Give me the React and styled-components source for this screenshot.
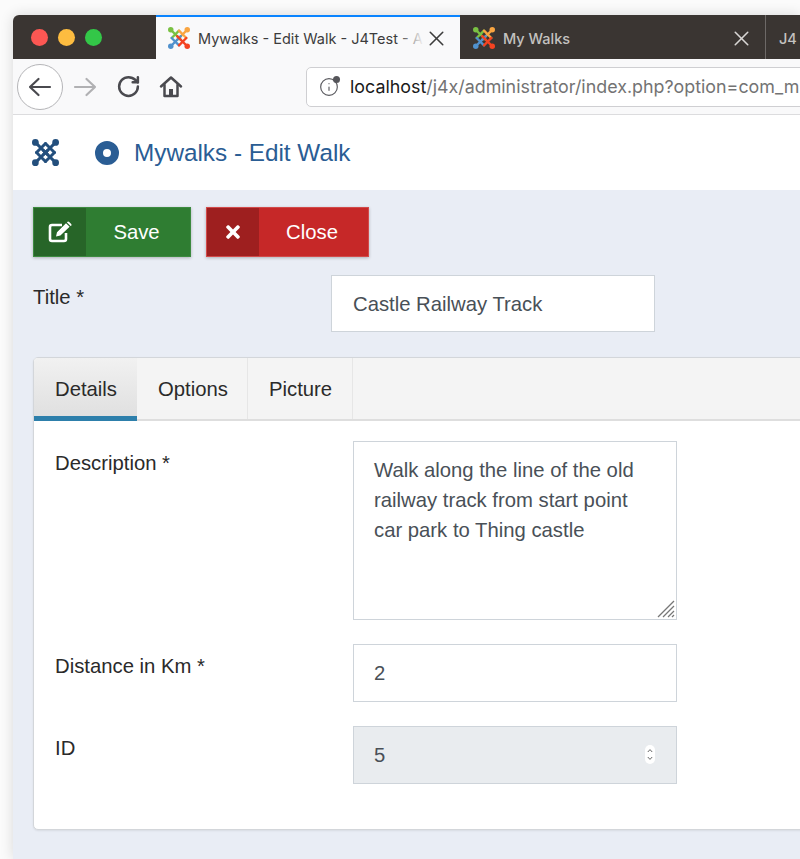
import React from 'react';
import styled, { createGlobalStyle } from 'styled-components';
import { RotateCw, Info, X } from 'lucide-react';
import { FaTimes } from 'react-icons/fa';

const GlobalStyle = createGlobalStyle`
html, body {
  margin: 0;
  padding: 0;
  width: 800px;
  height: 859px;
  overflow: hidden;
  background: #fbfbfb;
}
* { box-sizing: border-box; }
`

const Browser = styled.div`
margin: 15px 0 0 13px;
height: 844px;
border-radius: 6px 0 0 0;
overflow: hidden;
box-shadow: 0 0 14px rgba(0, 0, 0, .14);
display: flex;
flex-direction: column;
font-family: "Liberation Sans", Arial, sans-serif;
`

const TabStrip = styled.div`
height: 44px;
flex-shrink: 0;
display: flex;
background: #3a3532;
`

const Traffic = styled.div`
width: 143px;
flex-shrink: 0;
display: flex;
align-items: center;
gap: 10px;
padding: 0 0 0 18px;
`

const Light = styled.span`
width: 17px;
height: 17px;
border-radius: 50%;
background: ${p => p.$color};
`

const BrowserTab = styled.div`
width: ${p => p.$active ? '304px' : '305px'};
flex-shrink: 0;
display: flex;
align-items: center;
padding: ${p => p.$active ? '0 11px 0 12px' : '2px 11px 0 13px'};
background: ${p => p.$active ? '#f9f9fa' : 'transparent'};
border-top: ${p => p.$active ? '2px solid #0a84ff' : '0'};
color: ${p => p.$active ? '#3c3c3c' : '#c4c2c0'};
font-family: Inter, "Noto Sans", sans-serif;
font-size: 14.5px;
font-weight: ${p => p.$active ? 400 : 500};
white-space: nowrap;
`

const TabLabel = styled.span`
flex: 1;
margin-left: 8px;
position: relative;
`

const TabFade = styled.span`
position: absolute;
right: 0;
top: 0;
bottom: 0;
width: 26px;
background: linear-gradient(to right, rgba(249, 249, 250, 0), #f9f9fa);
`

const MiniTab = styled.div`
flex: 1;
display: flex;
align-items: center;
padding: 2px 0 0 13px;
border-left: 1px solid #6d6967;
color: #c4c2c0;
font-family: Inter, "Noto Sans", sans-serif;
font-size: 14.5px;
font-weight: 500;
`

const Toolbar = styled.div`
height: 56px;
flex-shrink: 0;
display: flex;
align-items: center;
padding: 0 0 0 4px;
background: #f9f9fa;
border-bottom: 1px solid #dcdcde;
color: #4a4a4f;
`

const BackButton = styled.div`
width: 46px;
height: 46px;
border-radius: 50%;
border: 1px solid #b5b5b8;
background: #fff;
display: flex;
align-items: center;
justify-content: center;
`

const ToolIcon = styled.div`
margin-left: ${p => p.$left}px;
display: flex;
color: ${p => p.$muted ? '#b1b1b3' : '#4a4a4f'};
`

const UrlBar = styled.div`
margin-left: 123px;
flex: 1;
height: 40px;
margin-right: -40px;
display: flex;
align-items: center;
padding-left: 12px;
background: #fff;
border: 1px solid #cfcfd2;
border-radius: 5px;
font-family: Inter, "Noto Sans", sans-serif;
font-size: 17.85px;
color: #737373;
white-space: nowrap;
overflow: hidden;
`

const InfoWrap = styled.span`
position: relative;
display: flex;
margin-right: 11px;
color: #5b5b60;
`

const InfoDot = styled.span`
position: absolute;
right: -1px;
top: -1px;
width: 7px;
height: 7px;
border-radius: 50%;
background: #55555a;
`

const Host = styled.span`
color: #1a1a1a;
`

const PageHeader = styled.header`
height: 75px;
flex-shrink: 0;
display: flex;
align-items: center;
padding: 0 0 0 19px;
background: #fff;
`

const LogoGap = styled.span`
width: 36px;
`

const PageTitle = styled.h1`
margin: 0 0 0 15px;
color: #2a5d94;
font-size: 24.3px;
font-weight: 400;
`

const Main = styled.main`
flex: 1;
background: #e9edf5;
padding: 17px 0 0 20px;
overflow: hidden;
`

const Actions = styled.div`
display: flex;
gap: 15px;
`

const ActionButton = styled.button`
width: ${p => p.$width}px;
height: 50px;
padding: 0;
display: flex;
align-items: stretch;
border: 1px solid ${p => p.$border};
background: ${p => p.$color};
color: #fff;
font-family: "Liberation Sans", Arial, sans-serif;
font-size: 20.3px;
box-shadow: 0 1px 3px rgba(0, 0, 0, .25);
`

const ActionIcon = styled.span`
width: 52px;
display: flex;
align-items: center;
justify-content: center;
background: ${p => p.$color};
font-size: ${p => p.$size}px;
`

const ActionText = styled.span`
flex: 1;
display: flex;
align-items: center;
justify-content: center;
padding-right: 3px;
`

const TitleRow = styled.div`
margin-top: 18px;
display: grid;
grid-template-columns: 298px 324px;
`

const Label = styled.label`
padding-top: 7px;
color: #2a2a2a;
font-size: 20.3px;
line-height: 30px;
`

const TextInput = styled.input`
display: block;
width: 324px;
height: 58px;
padding: 0 20px;
border: 1px solid #ced4da;
border-radius: 0;
outline: 0;
background: ${p => p.disabled ? '#e9ecef' : '#fff'};
color: #495057;
font-family: "Liberation Sans", Arial, sans-serif;
font-size: 20.3px;
opacity: 1;
-webkit-text-fill-color: #495057;
`

const TitleInput = styled(TextInput)`
height: 57px;
padding: 1px 21px 0;
`

const Card = styled.section`
margin: 25px -20px 0 0;
border: 1px solid #d3d6da;
border-radius: 5px;
background: #fff;
overflow: hidden;
box-shadow: 0 1px 2px rgba(0, 0, 0, .08);
`

const CardTabs = styled.nav`
height: 63px;
display: flex;
background: #f4f4f4;
border-bottom: 2px solid #dedede;
`

const CardTab = styled.div`
display: flex;
align-items: center;
width: ${p => p.$width}px;
height: ${p => p.$active ? '63px' : '61px'};
padding: ${p => p.$active ? '5px' : '1px'} 0 0 21px;
border-right: ${p => p.$active ? '0' : '1px solid #e6e6e6'};
border-bottom: ${p => p.$active ? '5px solid #2d7fab' : '0'};
background: ${p => p.$active ? 'linear-gradient(#f1f1f1, #e0e0e0)' : 'transparent'};
color: #2a2a2a;
font-size: 20.3px;
`

const CardBody = styled.div`
padding: 20px 0 45px 21px;
display: grid;
grid-template-columns: 298px 324px;
row-gap: 24px;
`

const DescriptionBox = styled.div`
position: relative;
width: 324px;
height: 179px;
`

const Description = styled.textarea`
display: block;
width: 100%;
height: 100%;
padding: 13px 20px;
border: 1px solid #ced4da;
border-radius: 0;
outline: 0;
resize: none;
overflow: hidden;
color: #495057;
font-family: "Liberation Sans", Arial, sans-serif;
font-size: 20.3px;
line-height: 30px;
`

const Grip = styled.svg`
position: absolute;
right: 2px;
bottom: 2px;
`

const NumberBox = styled.div`
position: relative;
width: 324px;
`

const Spinner = styled.svg`
position: absolute;
right: 22px;
top: 19px;
`

function JoomlaMark({ size, mono }) {
  const c = mono
    ? ['#234f7d', '#234f7d', '#234f7d', '#234f7d']
    : ['#7ac143', '#f9a541', '#f44321', '#5091cd'];
  return (
    <svg width={size} height={size} viewBox="0 0 24 24" fill="none" strokeWidth="2.6" strokeLinecap="round">
      <path d="M3 3 L14 14 M12 4 L4 12" stroke={c[0]} />
      <path d="M21 3 L10 14 M12 4 L20 12" stroke={c[1]} />
      <path d="M3 21 L14 10 M4 12 L12 20" stroke={c[3]} />
      <path d="M21 21 L10 10 M20 12 L12 20" stroke={c[2]} />
      <circle cx="3" cy="3" r="3" fill={c[0]} />
      <circle cx="21" cy="3" r="3" fill={c[1]} />
      <circle cx="21" cy="21" r="3" fill={c[2]} />
      <circle cx="3" cy="21" r="3" fill={c[3]} />
    </svg>
  );
}

function TargetIcon() {
  return (
    <svg width="24" height="24" viewBox="0 0 24 24">
      <circle cx="12" cy="12" r="8" fill="none" stroke="#2a5d94" strokeWidth="8" />
    </svg>
  );
}

function NavArrow({ flip }) {
  return (
    <svg width="24" height="20" viewBox="0 0 24 20" fill="none" stroke="currentColor" strokeWidth="2.2"
      strokeLinecap="round" strokeLinejoin="round" style={{ transform: flip ? 'scaleX(-1)' : 'none' }}>
      <path d="M2 10 H22 M10.5 2 L2 10 L10.5 18" />
    </svg>
  );
}

function HomeIcon() {
  return (
    <svg width="24" height="24" viewBox="0 0 24 24" fill="none" stroke="currentColor" strokeWidth="2.5"
      strokeLinecap="round" strokeLinejoin="round">
      <path d="M2 11.5 L12 2.5 L22 11.5" />
      <path d="M5.5 10 V21 H18.5 V10" />
      <rect x="10" y="14" width="4" height="7" fill="currentColor" stroke="none" />
    </svg>
  );
}

function EditIcon() {
  return (
    <svg width="25" height="22" viewBox="0 0 25 22">
      <path d="M14 4 H4 Q2 4 2 6 V18 Q2 20 4 20 H16 Q18 20 18 18 V12" fill="none" stroke="#fff" strokeWidth="2.6" />
      <path d="M8 15.5 L9 11.2 L18 2.2 L21.6 5.8 L12.4 14.6 Z M19.2 1 Q20.2 0.2 21.2 1 L23.2 3 Q24 4 23.2 4.8 L22.6 5 L19 1.4 Z" fill="#fff" />
    </svg>
  );
}

export default function App() {
  return (
    <Browser>
      <GlobalStyle />

      <TabStrip>
        <Traffic>
          <Light $color="#fc5753" />
          <Light $color="#fdbc40" />
          <Light $color="#33c748" />
        </Traffic>
        <BrowserTab $active>
          <JoomlaMark size={22} />
          <TabLabel>Mywalks - Edit Walk - J4Test - A<TabFade /></TabLabel>
          <X size={25} strokeWidth={1.5} />
        </BrowserTab>
        <BrowserTab>
          <JoomlaMark size={22} />
          <TabLabel>My Walks</TabLabel>
          <X size={25} strokeWidth={1.5} color="#d8d6d4" />
        </BrowserTab>
        <MiniTab>J4</MiniTab>
      </TabStrip>

      <Toolbar>
        <BackButton><NavArrow /></BackButton>
        <ToolIcon $left={10} $muted><NavArrow flip /></ToolIcon>
        <ToolIcon $left={19}><RotateCw size={25} strokeWidth={2.4} /></ToolIcon>
        <ToolIcon $left={18}><HomeIcon /></ToolIcon>
        <UrlBar>
          <InfoWrap><Info size={20} strokeWidth={1.4} /><InfoDot /></InfoWrap>
          <Host>localhost</Host>/j4x/administrator/index.php?option=com_m
        </UrlBar>
      </Toolbar>

      <PageHeader>
        <JoomlaMark size={27} mono />
        <LogoGap />
        <TargetIcon />
        <PageTitle>Mywalks - Edit Walk</PageTitle>
      </PageHeader>

      <Main>
        <Actions>
          <ActionButton $width={158} $color="#2f7d32" $border="#3d8a40">
            <ActionIcon $color="#276528"><EditIcon /></ActionIcon>
            <ActionText>Save</ActionText>
          </ActionButton>
          <ActionButton $width={163} $color="#c62828" $border="#d24a4a">
            <ActionIcon $color="#9e1f1f" $size={20}><FaTimes /></ActionIcon>
            <ActionText>Close</ActionText>
          </ActionButton>
        </Actions>

        <TitleRow>
          <Label>Title *</Label>
          <TitleInput defaultValue="Castle Railway Track" />
        </TitleRow>

        <Card>
          <CardTabs>
            <CardTab $active $width={103}>Details</CardTab>
            <CardTab $width={111}>Options</CardTab>
            <CardTab $width={105}>Picture</CardTab>
          </CardTabs>
          <CardBody>
            <Label>Description *</Label>
            <DescriptionBox>
              <Description defaultValue="Walk along the line of the old railway track from start point car park to Thing castle" />
              <Grip width="18" height="18" viewBox="0 0 18 18" stroke="#777" strokeWidth="1.2">
                <path d="M1 17 L17 1" />
                <path d="M6 17 L17 6" />
                <path d="M11 17 L17 11" />
                <path d="M15 17 L17 15" />
              </Grip>
            </DescriptionBox>

            <Label>Distance in Km *</Label>
            <TextInput defaultValue="2" />

            <Label>ID</Label>
            <NumberBox>
              <TextInput disabled defaultValue="5" />
              <Spinner width="10" height="19" viewBox="0 0 10 19">
                <rect width="10" height="19" rx="5" fill="#fff" />
                <path d="M2.8 7 L5 4.6 L7.2 7 M2.8 12 L5 14.4 L7.2 12" fill="none" stroke="#666" strokeWidth="1" />
              </Spinner>
            </NumberBox>
          </CardBody>
        </Card>
      </Main>
    </Browser>
  );
}
